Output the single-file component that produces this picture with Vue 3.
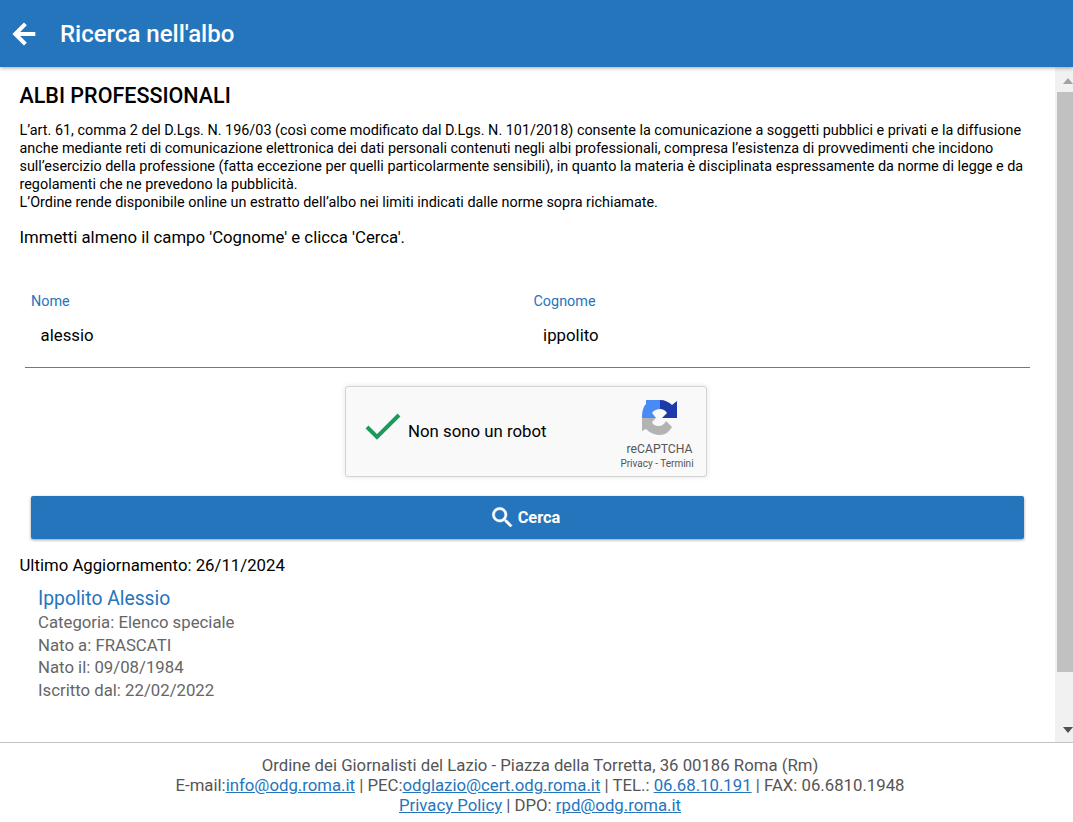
<script setup>
const intro = [
  "L’art. 61, comma 2 del D.Lgs. N. 196/03 (così come modificato dal D.Lgs. N. 101/2018) consente la comunicazione a soggetti pubblici e privati e la diffusione anche mediante reti di comunicazione elettronica dei dati personali contenuti negli albi professionali, compresa l’esistenza di provvedimenti che incidono sull’esercizio della professione (fatta eccezione per quelli particolarmente sensibili), in quanto la materia è disciplinata espressamente da norme di legge e da regolamenti che ne prevedono la pubblicità.",
  "L’Ordine rende disponibile online un estratto dell’albo nei limiti indicati dalle norme sopra richiamate."
]
const details = ["Categoria: Elenco speciale", "Nato a: FRASCATI", "Nato il: 09/08/1984", "Iscritto dal: 22/02/2022"]
</script>

<template>
  <div class="page">
    <header class="bar">
      <svg class="back" viewBox="0 0 24 24" width="32" height="32"><path fill="#fff" d="M20 11H7.83l5.59-5.59L12 4l-8 8 8 8 1.41-1.41L7.83 13H20z" stroke="#fff" stroke-width="1"/></svg>
      <h1 class="title">Ricerca nell'albo</h1>
    </header>
    <div class="middle">
      <main class="content">
        <h2 class="heading">ALBI PROFESSIONALI</h2>
        <div class="intro">
          <p v-for="line in intro" :key="line">{{ line }}</p>
        </div>
        <p class="hint">Immetti almeno il campo 'Cognome' e clicca 'Cerca'.</p>
        <div class="fields">
          <div class="field">
            <label class="label">Nome</label>
            <div class="value">alessio</div>
          </div>
          <div class="field">
            <label class="label">Cognome</label>
            <div class="value">ippolito</div>
          </div>
        </div>
        <div class="captcha">
          <svg class="check" viewBox="0 0 36 28" width="36" height="28"><path d="M2 14 L12 24 L34 2" fill="none" stroke="#1c9a5e" stroke-width="4"/></svg>
          <span class="captcha-text">Non sono un robot</span>
          <div class="brand">
            <svg viewBox="0 0 35 35" width="35" height="35" class="logo">
              <path fill="#b3b3b3" d="M0 18 V31 L4 29 C8 33 13 35 18 35 C23 35 27 32 30 27 L24 21 C22 25 19 26 17 26 C14 26 11 25 10 22 L14 18 Z"/>
              <path fill="#4a8af4" d="M0 18 C0 12 1 7 4 4 L4 0 H18 V9 C15 9 12 10 10 13 L14 18 Z"/>
              <path fill="#1c3aa9" d="M18 0 C23 0 27 2 30 5 L35 1 V18 H20 L25 13 C23 10 21 9 18 9 Z"/>
            </svg>
            <div class="brand-name">reCAPTCHA</div>
            <div class="brand-links">Privacy - Termini</div>
          </div>
        </div>
        <button class="search" type="button">
          <svg viewBox="0 0 24 24" width="27" height="27"><path fill="#fff" stroke="#fff" stroke-width="0.5" d="M15.5 14h-.79l-.28-.27A6.47 6.47 0 0 0 16 9.5 6.5 6.5 0 1 0 9.5 16c1.61 0 3.09-.59 4.23-1.57l.27.28v.79l5 4.99L20.49 19l-4.99-5zm-6 0C7.01 14 5 11.99 5 9.5S7.01 5 9.5 5 14 7.01 14 9.5 11.99 14 9.5 14z"/></svg>
          <span>Cerca</span>
        </button>
        <p class="updated">Ultimo Aggiornamento: 26/11/2024</p>
        <div class="result">
          <div class="name">Ippolito Alessio</div>
          <div v-for="d in details" :key="d" class="detail">{{ d }}</div>
        </div>
      </main>
      <div class="scrollbar">
        <div class="arrow up"></div>
        <div class="thumb"></div>
        <div class="arrow down"></div>
      </div>
    </div>
    <footer class="foot">
      <div>Ordine dei Giornalisti del Lazio - Piazza della Torretta, 36 00186 Roma (Rm)</div>
      <div>E-mail:<a href="#">info@odg.roma.it</a> | PEC:<a href="#">odglazio@cert.odg.roma.it</a> | TEL.: <a href="#">06.68.10.191</a> | FAX: 06.6810.1948</div>
      <div><a href="#">Privacy Policy</a> | DPO: <a href="#">rpd@odg.roma.it</a></div>
    </footer>
  </div>
</template>

<style scoped>
.page {
  width: 1073px;
  height: 822px;
  display: flex;
  flex-direction: column;
  overflow: hidden;
  font-family: Roboto, sans-serif;
  background: #fff;
  color: #000;
}
.bar {
  height: 67px;
  flex: none;
  background: #2575bd;
  display: flex;
  align-items: center;
  padding-left: 8px;
  box-shadow: 0 1px 4px rgba(0, 0, 0, 0.35);
  position: relative;
  z-index: 1;
}
.back { flex: none; }
.title {
  margin: 0 0 0 20px;
  font-size: 24px;
  font-weight: 500;
  color: #fff;
}
.middle {
  flex: 1;
  min-height: 0;
  display: flex;
}
.content {
  flex: 1;
  min-width: 0;
  padding: 0 0 0 19.5px;
}
.heading {
  margin: 16px 0 0;
  font-size: 21.5px;
  line-height: 26px;
  font-weight: 500;
}
.intro {
  margin-top: 13px;
  margin-right: 28px;
  font-size: 14.4px;
  line-height: 18px;
}
.intro p { margin: 0; }
.hint {
  margin: 13px 0 0;
  font-size: 16.75px;
  line-height: 24px;
}
.fields {
  margin: 44px 25px 0 5.5px;
  display: grid;
  grid-template-columns: 1fr 1fr;
  border-bottom: 1px solid #777;
  height: 74px;
}
.field { padding-left: 6px; }
.label {
  display: block;
  font-size: 14.4px;
  line-height: 18px;
  color: #2575bd;
}
.value {
  margin-top: 12px;
  padding-left: 9.6px;
  font-size: 16.8px;
  line-height: 24px;
}
.captcha {
  margin: 18px 0 0 325.5px;
  width: 362px;
  height: 91px;
  box-sizing: border-box;
  background: #f9f9f9;
  border: 1px solid #d3d3d3;
  border-radius: 3px;
  box-shadow: 0 0 4px 1px rgba(0, 0, 0, 0.08);
  display: flex;
  align-items: center;
  padding-left: 19px;
  position: relative;
}
.check { flex: none; margin-top: -9px; }
.captcha-text {
  margin-left: 7px;
  margin-top: -2px;
  font-size: 16.8px;
}
.brand {
  margin-left: auto;
  width: 86px;
  margin-right: 5px;
  text-align: center;
  color: #555;
  padding-top: 6px;
}
.logo { display: block; margin: 0 auto; transform: translateX(1px); }
.brand-name { font-size: 12.2px; line-height: 14px; margin-top: 7px; padding-left: 3px; }
.brand-links { font-size: 10px; line-height: 12px; margin-top: 2px; margin-left: -2px; }
.search {
  margin: 19px 0 0 11.5px;
  width: 993px;
  height: 43px;
  display: flex;
  align-items: center;
  justify-content: center;
  gap: 2px;
  border: 0;
  border-radius: 2px;
  background: #2575bd;
  color: #fff;
  font-family: inherit;
  font-size: 16.4px;
  font-weight: 700;
  box-shadow: 0 1px 3px rgba(0, 0, 0, 0.4);
  padding: 0 6px 0 0;
}
.updated {
  margin: 14px 0 0;
  font-size: 16.75px;
  line-height: 24px;
}
.result { margin: 10px 0 0 18.5px; }
.name {
  font-size: 19.3px;
  line-height: 24px;
  color: #2575bd;
}
.detail {
  font-size: 16.75px;
  line-height: 22.5px;
  color: #666;
}
.detail:first-of-type { margin-top: 1px; }
.scrollbar {
  flex: none;
  width: 18px;
  background: #f1f1f1;
  display: flex;
  flex-direction: column;
  align-items: flex-end;
}
.thumb {
  width: 16px;
  height: 580px;
  background: #c1c1c1;
}
.arrow {
  width: 0;
  height: 0;
  margin: 0 0.5px 0 0;
  border-left: 5.5px solid transparent;
  border-right: 5.5px solid transparent;
}
.up { border-bottom: 6px solid #a3a3a3; margin-top: 11px; margin-bottom: 8px; }
.down { border-top: 6px solid #505050; margin-top: 55px; }
.foot {
  flex: none;
  height: 80px;
  box-sizing: border-box;
  border-top: 1px solid #c4c4c4;
  padding: 12px 0 0 7px;
  text-align: center;
  font-size: 16.75px;
  line-height: 20px;
  color: #555;
}
.foot a { color: #2575bd; }
</style>
